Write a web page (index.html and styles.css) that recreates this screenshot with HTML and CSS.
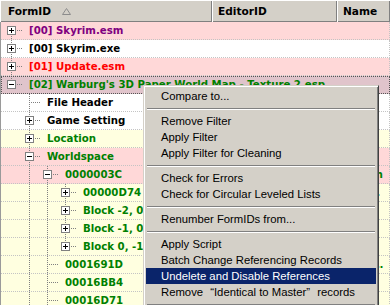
FILE: index.html
```html
<!DOCTYPE html>
<html>
<head>
<meta charset="utf-8">
<link rel="stylesheet" href="styles.css">
</head>
<body>
<div class="header">
  <div class="hcell hc1"><span>FormID</span><svg class="sort" width="9" height="7" viewBox="0 0 9 7"><path d="M0.5 6.5 L4.5 0.5 L8.5 6.5 Z" fill="none" stroke="#8c8c8c" stroke-width="1"/></svg></div>
  <div class="hcell hc2">EditorID</div>
  <div class="hcell hc3">Name</div>
</div>
<div class="list">
  <div class="row pink">
    <div class="col1"><span class="t node first"><i class="box plus"></i></span><span class="lbl purple">[00] Skyrim.esm</span></div>
    <div class="col2"></div><div class="col3"></div>
  </div>
  <div class="row white">
    <div class="col1"><span class="t node tee"><i class="box plus"></i></span><span class="lbl black">[00] Skyrim.exe</span></div>
    <div class="col2"></div><div class="col3"></div>
  </div>
  <div class="row pink">
    <div class="col1"><span class="t node tee"><i class="box plus"></i></span><span class="lbl red">[01] Update.esm</span></div>
    <div class="col2"></div><div class="col3"></div>
  </div>
  <div class="row sel">
    <div class="col1"><span class="t node ell"><i class="box minus"></i></span><span class="lbl green">[02] Warburg's 3D Paper World Map - Texture 2.esp</span></div>
    <div class="col2"></div><div class="col3"></div>
  </div>
  <div class="row white">
    <div class="col1"><span class="t"></span><span class="t node tee"></span><span class="lbl black">File Header</span></div>
    <div class="col2"></div><div class="col3"></div>
  </div>
  <div class="row white">
    <div class="col1"><span class="t"></span><span class="t node tee"><i class="box plus"></i></span><span class="lbl black">Game Setting</span></div>
    <div class="col2"></div><div class="col3"></div>
  </div>
  <div class="row yellow">
    <div class="col1"><span class="t"></span><span class="t node tee"><i class="box plus"></i></span><span class="lbl green">Location</span></div>
    <div class="col2"></div><div class="col3"></div>
  </div>
  <div class="row pink">
    <div class="col1"><span class="t"></span><span class="t node tee"><i class="box minus"></i></span><span class="lbl green">Worldspace</span></div>
    <div class="col2"></div><div class="col3"></div>
  </div>
  <div class="row pink">
    <div class="col1"><span class="t"></span><span class="t pipe"></span><span class="t node tee"><i class="box minus"></i></span><span class="lbl green">0000003C</span></div>
    <div class="col2"></div><div class="col3 txt">Skyrim</div>
  </div>
  <div class="row yellow">
    <div class="col1"><span class="t"></span><span class="t pipe"></span><span class="t pipe"></span><span class="t node tee"><i class="box plus"></i></span><span class="lbl green">00000D74</span></div>
    <div class="col2"></div><div class="col3 txt">Whiterun Hold</div>
  </div>
  <div class="row yellow">
    <div class="col1"><span class="t"></span><span class="t pipe"></span><span class="t pipe"></span><span class="t node tee"><i class="box plus"></i></span><span class="lbl green">Block -2, 0</span></div>
    <div class="col2"></div><div class="col3"></div>
  </div>
  <div class="row yellow">
    <div class="col1"><span class="t"></span><span class="t pipe"></span><span class="t pipe"></span><span class="t node tee"><i class="box plus"></i></span><span class="lbl green">Block -1, 0</span></div>
    <div class="col2"></div><div class="col3"></div>
  </div>
  <div class="row yellow">
    <div class="col1"><span class="t"></span><span class="t pipe"></span><span class="t pipe"></span><span class="t node ell"><i class="box plus"></i></span><span class="lbl green">Block 0, -1</span></div>
    <div class="col2"></div><div class="col3"></div>
  </div>
  <div class="row yellow">
    <div class="col1"><span class="t"></span><span class="t pipe"></span><span class="t node tee"></span><span class="lbl green">0001691D</span></div>
    <div class="col2"></div><div class="col3 txt">Riverwood Road</div>
  </div>
  <div class="row yellow">
    <div class="col1"><span class="t"></span><span class="t pipe"></span><span class="t node tee"></span><span class="lbl green">00016BB4</span></div>
    <div class="col2"></div><div class="col3"></div>
  </div>
  <div class="row yellow">
    <div class="col1"><span class="t"></span><span class="t pipe"></span><span class="t node tee"></span><span class="lbl green">00016D71</span></div>
    <div class="col2"></div><div class="col3 txt">Helgen Keep Road</div>
  </div>
</div>

<div class="menu">
  <div class="mi">Compare to...</div>
  <div class="sep"></div>
  <div class="mi">Remove Filter</div>
  <div class="mi">Apply Filter</div>
  <div class="mi">Apply Filter for Cleaning</div>
  <div class="sep"></div>
  <div class="mi">Check for Errors</div>
  <div class="mi">Check for Circular Leveled Lists</div>
  <div class="sep"></div>
  <div class="mi">Renumber FormIDs from...</div>
  <div class="sep"></div>
  <div class="mi">Apply Script</div>
  <div class="mi">Batch Change Referencing Records</div>
  <div class="mi hl">Undelete and Disable References</div>
  <div class="mi">Remove <span class="ql">“</span>Identical to Master<span class="qr">”</span> records</div>
  <div class="sep"></div>
</div>
</body>
</html>
```

FILE: styles.css
```css
html, body {
  margin: 0;
  padding: 0;
}
body {
  width: 391px;
  height: 305px;
  overflow: hidden;
  background: #fff;
  position: relative;
  font-family: "DejaVu Sans", sans-serif;
}

/* ---------- header ---------- */
.header {
  display: flex;
  height: 22px;
  width: 390px;
  background: #d4d0c8;
}
.hcell {
  box-sizing: border-box;
  height: 22px;
  display: flex;
  align-items: center;
  box-shadow: inset 1px 1px #fff, inset -1px -1px #808080;
  font: bold 10.6px "DejaVu Sans", sans-serif;
  color: #000;
  white-space: nowrap;
}
.hc1 { width: 212px; padding-left: 8px; gap: 11px; }
.hc2 { width: 125px; padding-left: 6px; }
.hc3 { width: 53px; padding-left: 6px; }
.sort { display: block; margin-top: 1px; }

/* ---------- list ---------- */
.list {
  width: 389px;
  border-left: 1px solid #9a9a9a;
}
.row {
  display: grid;
  grid-template-columns: 211px 125px 52px;
  height: 17px;
  border-bottom: 1px dotted #c4c4c4;
  border-right: 1px dotted #c4c4c4;
}
.pink { background: #ffd8d8; }
.white { background: #fff; }
.yellow { background: #ffffe0; }
.sel {
  background: #e0c4cb;
  outline: 1px dotted #555;
  outline-offset: -1px;
}

.col1 {
  display: flex;
  padding-left: 1px;
  white-space: nowrap;
  min-width: 0;
}
.col2, .col3 {
  min-width: 0;
  white-space: nowrap;
}
.col2 { padding-left: 6px; overflow: hidden; }
.col3 {
  padding: 0 4px 0 6px;
  overflow: hidden;
  text-overflow: ellipsis;
}
.txt {
  font: bold 10.2px/17px "DejaVu Sans", sans-serif;
  color: #008000;
}

/* tree lines */
.t {
  flex: none;
  width: 18px;
  height: 17px;
  background-repeat: no-repeat;
}
.t.node {
  width: 21px;
  box-sizing: border-box;
  padding-left: 5px;
  display: flex;
  align-items: center;
}
.pipe {
  background-image: repeating-linear-gradient(to bottom, #808080 0 1px, transparent 1px 2px);
  background-size: 1px 17px;
  background-position: 9px 0;
}
.tee {
  background-image:
    repeating-linear-gradient(to bottom, #808080 0 1px, transparent 1px 2px),
    repeating-linear-gradient(to right, #808080 0 1px, transparent 1px 2px);
  background-size: 1px 17px, 12px 1px;
  background-position: 9px 0, 9px 8px;
}
.ell {
  background-image:
    repeating-linear-gradient(to bottom, #808080 0 1px, transparent 1px 2px),
    repeating-linear-gradient(to right, #808080 0 1px, transparent 1px 2px);
  background-size: 1px 9px, 12px 1px;
  background-position: 9px 0, 9px 8px;
}
.first {
  background-image:
    repeating-linear-gradient(to bottom, #808080 0 1px, transparent 1px 2px),
    repeating-linear-gradient(to right, #808080 0 1px, transparent 1px 2px);
  background-size: 1px 9px, 12px 1px;
  background-position: 9px 8px, 9px 8px;
}
.box {
  display: block;
  width: 9px;
  height: 9px;
  box-sizing: border-box;
  border: 1px solid #808080;
  background-color: #fff;
  background-repeat: no-repeat;
  background-position: center;
}
.plus {
  background-image: linear-gradient(#000, #000), linear-gradient(#000, #000);
  background-size: 5px 1px, 1px 5px;
}
.minus {
  background-image: linear-gradient(#000, #000);
  background-size: 5px 1px;
}

.lbl {
  padding-left: 6px;
  font: bold 10.2px/17px "DejaVu Sans", sans-serif;
}
.purple { color: #800080; }
.black { color: #000; }
.red { color: #ff0000; }
.green { color: #008000; }

/* ---------- context menu ---------- */
.menu {
  position: absolute;
  left: 143px;
  top: 85px;
  width: 236px;
  box-sizing: border-box;
  background: #d4d0c8;
  border: 1px solid;
  border-color: #d4d0c8 #404040 #404040 #d4d0c8;
  box-shadow: inset 1px 1px #fff, inset -1px -1px #808080;
  padding: 2px;
  font-family: "Liberation Sans", Arial, sans-serif;
  font-size: 11.3px;
  color: #000;
}
.mi {
  height: 16px;
  line-height: 16px;
  padding-left: 15px;
  white-space: nowrap;
}
.mi.hl {
  background: #0a246a;
  color: #fff;
}
.ql { padding-left: 4px; }
.qr { padding-right: 4px; }
.sep {
  height: 9px;
  box-sizing: border-box;
  padding-top: 4px;
}
.sep::before {
  content: "";
  display: block;
  margin: 0 1px;
  border-top: 1px solid #808080;
  border-bottom: 1px solid #fff;
}
```
